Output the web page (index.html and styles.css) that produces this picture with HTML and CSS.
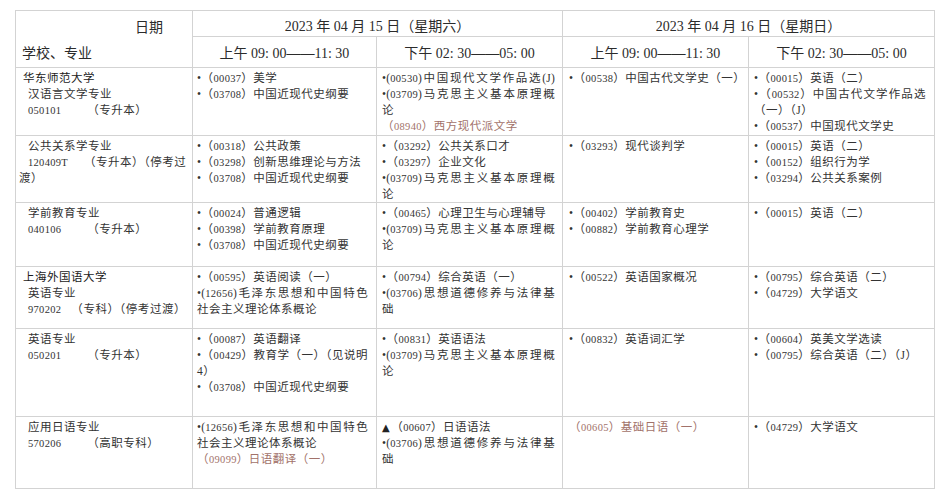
FILE: index.html
```html
<!DOCTYPE html>
<html lang="zh-CN">
<head>
<meta charset="utf-8">
<title>2023年4月自学考试课程安排</title>
<link rel="stylesheet" href="styles.css">
</head>
<body>
<table class="sched">
  <colgroup>
    <col class="c-school"><col class="c-am"><col class="c-pm"><col class="c-pm"><col class="c-pm">
  </colgroup>
  <thead>
    <tr class="h1">
      <th class="corner" rowspan="2">
        <div class="corner-date">日期</div>
        <div class="corner-school">学校、专业</div>
      </th>
      <th class="day" colspan="2">2023 年 04 月 15 日（星期六）</th>
      <th class="day" colspan="2">2023 年 04 月 16 日（星期日）</th>
    </tr>
    <tr class="h2">
      <th class="slot">上午 09: 00<span class="dash">——</span>11: 30</th>
      <th class="slot">下午 02: 30<span class="dash">——</span>05: 00</th>
      <th class="slot">上午 09: 00<span class="dash">——</span>11: 30</th>
      <th class="slot">下午 02: 30<span class="dash">——</span>05: 00</th>
    </tr>
  </thead>
  <tbody>
    <tr class="r1">
      <td class="school">
        <div class="uni">华东师范大学</div>
        <div class="maj">汉语言文学专业</div>
        <div class="maj"><span class="n">050101</span><span class="gap"></span>（专升本）</div>
      </td>
      <td class="k2">
        <div class="l">•（<span class="n">00037</span>）美学</div>
        <div class="l">•（<span class="n">03708</span>）中国近现代史纲要</div>
      </td>
      <td class="k3">
        <div class="l j tight">•(<span class="n">00530</span>)中国现代文学作品选(J)</div>
        <div class="l j tight">•(<span class="n">03709</span>)马克思主义基本原理概</div>
        <div class="l">论</div>
        <div class="l red">（<span class="n">08940</span>）西方现代派文学</div>
      </td>
      <td class="k4">
        <div class="l">•（<span class="n">00538</span>）中国古代文学史（一）</div>
      </td>
      <td class="k5">
        <div class="l">•（<span class="n">00015</span>）英语（二）</div>
        <div class="l j">•（<span class="n">00532</span>）中国古代文学作品选</div>
        <div class="l">（一）（J）</div>
        <div class="l">•（<span class="n">00537</span>）中国现代文学史</div>
      </td>
    </tr>
    <tr class="r2">
      <td class="school">
        <div class="maj">公共关系学专业</div>
        <div class="maj j"><span class="n">120409T</span><span class="gap2"></span>（专升本）（停考过</div>
        <div class="l">渡）</div>
      </td>
      <td class="k2">
        <div class="l">•（<span class="n">00318</span>）公共政策</div>
        <div class="l">•（<span class="n">03298</span>）创新思维理论与方法</div>
        <div class="l">•（<span class="n">03708</span>）中国近现代史纲要</div>
      </td>
      <td class="k3">
        <div class="l">•（<span class="n">03292</span>）公共关系口才</div>
        <div class="l">•（<span class="n">03297</span>）企业文化</div>
        <div class="l j tight">•(<span class="n">03709</span>)马克思主义基本原理概</div>
        <div class="l">论</div>
      </td>
      <td class="k4">
        <div class="l">•（<span class="n">03293</span>）现代谈判学</div>
      </td>
      <td class="k5">
        <div class="l">•（<span class="n">00015</span>）英语（二）</div>
        <div class="l">•（<span class="n">00152</span>）组织行为学</div>
        <div class="l">•（<span class="n">03294</span>）公共关系案例</div>
      </td>
    </tr>
    <tr class="r3">
      <td class="school">
        <div class="maj">学前教育专业</div>
        <div class="maj"><span class="n">040106</span><span class="gap"></span>（专升本）</div>
      </td>
      <td class="k2">
        <div class="l">•（<span class="n">00024</span>）普通逻辑</div>
        <div class="l">•（<span class="n">00398</span>）学前教育原理</div>
        <div class="l">•（<span class="n">03708</span>）中国近现代史纲要</div>
      </td>
      <td class="k3">
        <div class="l">•（<span class="n">00465</span>）心理卫生与心理辅导</div>
        <div class="l j tight">•(<span class="n">03709</span>)马克思主义基本原理概</div>
        <div class="l">论</div>
      </td>
      <td class="k4">
        <div class="l">•（<span class="n">00402</span>）学前教育史</div>
        <div class="l">•（<span class="n">00882</span>）学前教育心理学</div>
      </td>
      <td class="k5">
        <div class="l">•（<span class="n">00015</span>）英语（二）</div>
      </td>
    </tr>
    <tr class="r4">
      <td class="school">
        <div class="uni">上海外国语大学</div>
        <div class="maj">英语专业</div>
        <div class="maj j"><span class="n">970202</span><span class="gap3"></span>（专科）（停考过渡）</div>
      </td>
      <td class="k2">
        <div class="l">•（<span class="n">00595</span>）英语阅读（一）</div>
        <div class="l j tight">•(<span class="n">12656</span>)毛泽东思想和中国特色</div>
        <div class="l">社会主义理论体系概论</div>
      </td>
      <td class="k3">
        <div class="l">•（<span class="n">00794</span>）综合英语（一）</div>
        <div class="l j tight">•(<span class="n">03706</span>)思想道德修养与法律基</div>
        <div class="l">础</div>
      </td>
      <td class="k4">
        <div class="l">•（<span class="n">00522</span>）英语国家概况</div>
      </td>
      <td class="k5">
        <div class="l">•（<span class="n">00795</span>）综合英语（二）</div>
        <div class="l">•（<span class="n">04729</span>）大学语文</div>
      </td>
    </tr>
    <tr class="r5">
      <td class="school">
        <div class="maj">英语专业</div>
        <div class="maj"><span class="n">050201</span><span class="gap"></span>（专升本）</div>
      </td>
      <td class="k2">
        <div class="l">•（<span class="n">00087</span>）英语翻译</div>
        <div class="l j">•（<span class="n">00429</span>）教育学（一）（见说明</div>
        <div class="l">4）</div>
        <div class="l">•（<span class="n">03708</span>）中国近现代史纲要</div>
      </td>
      <td class="k3">
        <div class="l">•（<span class="n">00831</span>）英语语法</div>
        <div class="l j tight">•(<span class="n">03709</span>)马克思主义基本原理概</div>
        <div class="l">论</div>
      </td>
      <td class="k4">
        <div class="l">•（<span class="n">00832</span>）英语词汇学</div>
      </td>
      <td class="k5">
        <div class="l">•（<span class="n">00604</span>）英美文学选读</div>
        <div class="l">•（<span class="n">00795</span>）综合英语（二）（J）</div>
      </td>
    </tr>
    <tr class="r6">
      <td class="school">
        <div class="maj">应用日语专业</div>
        <div class="maj"><span class="n">570206</span><span class="gap"></span>（高职专科）</div>
      </td>
      <td class="k2">
        <div class="l j tight">•(<span class="n">12656</span>)毛泽东思想和中国特色</div>
        <div class="l">社会主义理论体系概论</div>
        <div class="l red">（<span class="n">09099</span>）日语翻译（一）</div>
      </td>
      <td class="k3">
        <div class="l"><span class="tri">▲</span>（<span class="n">00607</span>）日语语法</div>
        <div class="l j tight">•(<span class="n">03706</span>)思想道德修养与法律基</div>
        <div class="l">础</div>
      </td>
      <td class="k4">
        <div class="l red">（<span class="n">00605</span>）基础日语（一）</div>
      </td>
      <td class="k5">
        <div class="l">•（<span class="n">04729</span>）大学语文</div>
      </td>
    </tr>
  </tbody>
</table>
</body>
</html>
```

FILE: styles.css
```css
html, body {
  margin: 0;
  padding: 0;
  background: #ffffff;
}

body {
  font-family: "Liberation Serif", "Noto Sans CJK SC", serif;
  color: #333333;
}

.sched {
  border-collapse: collapse;
  table-layout: fixed;
  width: 919px;
  margin: 10px 0 0 15px;
}

.c-school { width: 177px; }
.c-am { width: 184px; }
.c-pm { width: 186px; }

.sched th,
.sched td {
  border: 1px solid #d3d3d3;
  padding: 0;
  overflow: hidden;
}

.sched th {
  font-weight: normal;
  font-size: 14px;
  line-height: 14px;
  color: #2b2b2b;
}

.h1 { height: 26px; }
.h2 { height: 30px; }
.r1 { height: 68px; }
.r2 { height: 65px; }
.r3 { height: 64px; }
.r4 { height: 62px; }
.r5 { height: 88px; }
.r6 { height: 72px; }

.day {
  text-align: center;
  vertical-align: bottom;
  padding-bottom: 2px !important;
}

.slot {
  text-align: center;
  vertical-align: middle;
  padding-top: 3px !important;
}

.dash {
  font-weight: bold;
}

.corner {
  vertical-align: top;
  text-align: left;
}

.corner-date {
  height: 26px;
  box-sizing: border-box;
  display: flex;
  align-items: flex-end;
  justify-content: flex-end;
  padding: 0 29px 2px 0;
}

.corner-school {
  height: 30px;
  box-sizing: border-box;
  display: flex;
  align-items: center;
  padding: 4px 0 0 6px;
}

.sched td {
  vertical-align: top;
  font-size: 11.5px;
  line-height: 16px;
  letter-spacing: 0.5px;
}

.school { padding: 2px 6px 0 3px !important; }
.k2 { padding: 2px 8px 0 4px !important; }
.k3 { padding: 2px 7px 0 5px !important; }
.k4 { padding: 2px 7px 0 6px !important; }
.k5 { padding: 2px 8px 0 5px !important; }

.l, .uni, .maj {
  white-space: nowrap;
  height: 16px;
  line-height: 16px;
}

.uni {
  padding-left: 4px;
  color: #1a1a1a;
}

.maj {
  padding-left: 9px;
}

.j {
  text-align: justify;
  text-align-last: justify;
}

.tight {
  letter-spacing: 0.2px;
}

.n {
  font-size: 10.5px;
  line-height: 1;
  letter-spacing: 0.3px;
}

.gap {
  display: inline-block;
  width: 26px;
  height: 1px;
}

.gap2 {
  display: inline-block;
  width: 16px;
  height: 1px;
}

.gap3 {
  display: inline-block;
  width: 10px;
  height: 1px;
}

.red {
  color: #a2726a;
}

.tri {
  font-family: "DejaVu Sans", sans-serif;
  font-size: 10px;
  line-height: 1;
  color: #222222;
  margin-right: 1px;
}
```
